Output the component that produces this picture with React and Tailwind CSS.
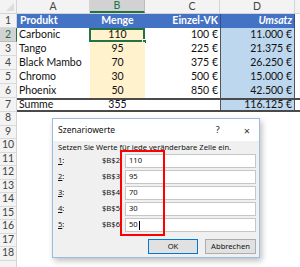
import React from "react";

const data = [
  ["Carbonic", "110", "100 €", "11.000 €"],
  ["Tango", "95", "225 €", "21.375 €"],
  ["Black Mambo", "70", "375 €", "26.250 €"],
  ["Chromo", "30", "500 €", "15.000 €"],
  ["Phoenix", "50", "850 €", "42.500 €"],
];

const inputs = [
  ["1", "$B$2", "110"],
  ["2", "$B$3", "95"],
  ["3", "$B$4", "70"],
  ["4", "$B$5", "30"],
  ["5", "$B$6", "50"],
];

function RowNum({ n, active, h }) {
  return (
    <div
      className={`w-[17px] shrink-0 flex items-center justify-center border-r border-b ${
        active
          ? "bg-[#d2d2d2] text-[#217346] border-r-[#217346] border-b-[#bcbcbc]"
          : "bg-[#f3f3f3] text-[#444] border-r-[#d4d4d4] border-b-[#dadada]"
      } ${h}`}
    >
      {n}
    </div>
  );
}

export default function App() {
  const emptyRows = [8, 9, 10, 11, 12, 13, 14, 15, 16, 17, 18];
  return (
    <div className="relative w-[300px] h-[267px] overflow-hidden bg-white font-['Lato',sans-serif] text-[10.5px] text-[#111]">
      {/* column header */}
      <div className="flex h-[14px] bg-[#f3f3f3] text-[#444] border-b border-[#d4d4d4]">
        <div className="relative w-[17px] shrink-0 border-r border-[#d4d4d4]">
          <div className="absolute right-[2px] bottom-[2px] w-0 h-0 border-l-[8px] border-l-transparent border-b-[8px] border-b-[#dcdcdc]" />
        </div>
        <div className="w-[73px] shrink-0 flex items-center justify-center border-r border-[#d4d4d4]">A</div>
        <div className="w-[55px] shrink-0 flex items-center justify-center bg-[#d2d2d2] text-[#217346] border-r border-[#bcbcbc] border-b-2 border-b-[#217346]">B</div>
        <div className="w-[75px] shrink-0 flex items-center justify-center pl-[20px] border-r border-[#d4d4d4]">C</div>
        <div className="w-[75px] shrink-0 flex items-center justify-center border-r border-[#d4d4d4]">D</div>
        <div className="flex-1" />
      </div>

      {/* row 1 */}
      <div className="flex h-[14px]">
        <RowNum n="1" h="h-[14px]" />
        <div className="w-[73px] shrink-0 bg-[#4472c4] text-white font-bold flex items-center pl-[3px]">Produkt</div>
        <div className="w-[55px] shrink-0 bg-[#4472c4] text-white font-bold flex items-center justify-center">Menge</div>
        <div className="w-[75px] shrink-0 bg-[#4472c4] text-white font-bold flex items-center justify-end pr-[2px]">Einzel-VK</div>
        <div className="w-[75px] shrink-0 bg-[#4472c4] text-white font-bold italic flex items-center justify-end pr-[2px] border-x border-[#2f4f8a]">Umsatz</div>
        <div className="flex-1" />
      </div>

      {/* data rows */}
      {data.map((r, i) => (
        <div key={i} className="flex h-[14px]">
          <RowNum n={String(i + 2)} active={i === 0} h="h-[14px]" />
          <div className="w-[73px] shrink-0 flex items-center pl-[2px]">{r[0]}</div>
          <div className="relative w-[55px] shrink-0 bg-[#fff2cc] flex items-center justify-center">
            {r[1]}
            {i === 0 && (
              <div className="absolute left-[-1px] top-0 right-0 bottom-0 border-2 border-[#217346]">
                <div className="absolute right-[-4px] bottom-[-4px] w-[5px] h-[5px] bg-[#217346] border border-white" />
              </div>
            )}
          </div>
          <div className="w-[75px] shrink-0 flex items-center justify-end pr-[2px]">{r[2]}</div>
          <div className="w-[75px] shrink-0 bg-[#bdd7ee] flex items-center justify-end pr-[2px] border-x border-[#555]">{r[3]}</div>
          <div className="flex-1" />
        </div>
      ))}

      {/* row 7 */}
      <div className="flex h-[14px]">
        <RowNum n="7" h="h-[14px]" />
        <div className="flex flex-1 border-y-2 border-[#4a4a4a]">
          <div className="w-[73px] shrink-0 flex items-center pl-[2px]">Summe</div>
          <div className="w-[55px] shrink-0 flex items-center justify-center">355</div>
          <div className="w-[75px] shrink-0" />
          <div className="w-[75px] shrink-0 bg-[#bdd7ee] flex items-center justify-end pr-[2px] border-x border-[#555]">116.125 €</div>
          <div className="flex-1" />
        </div>
      </div>

      {emptyRows.map((n) => (
        <div key={n} className="flex h-[13.5px]">
          <RowNum n={String(n)} h="h-[13.5px]" />
          <div className="flex-1" />
        </div>
      ))}
      <div className="flex h-[13.5px]">
        <RowNum n="" h="h-[13.5px]" />
        <div className="flex-1" />
      </div>

      {/* dialog */}
      <div className="absolute left-[52px] top-[118px] w-[208px] h-[140px] border border-[#9cbbe0] bg-[#f0f0f0] shadow-[2px_3px_6px_rgba(0,0,0,0.25)] font-['Noto_Sans',sans-serif] text-[7.6px] text-[#111] flex flex-col">
        <div className="h-[22px] bg-white flex items-center pl-[5px] pr-[9px] text-[8.5px]">
          <span className="flex-1">Szenariowerte</span>
          <span className="mr-[24px] text-[9px]">?</span>
          <span className="text-[11px] leading-none text-[#333]">×</span>
        </div>
        <div className="relative flex-1 flex flex-col pl-[5px] pr-[3px]">
          <div className="h-[12px] mt-[1px] flex items-center">Setzen Sie Werte für jede veränderbare Zelle ein.</div>
          <div className="flex flex-col gap-[2px]">
            {inputs.map(([n, ref, v], i) => (
              <div key={n} className="flex items-center h-[14px]">
                <span className="w-[20px]"><span className="underline">{n}</span>:</span>
                <span className="w-[42px] text-right">{ref}</span>
                <div className="ml-[5px] w-[131px] h-[14px] bg-white border border-[#c6c6c6] flex items-center pl-[3px]">
                  {v}
                  {i === 4 && <span className="w-px h-[9px] bg-black ml-px" />}
                </div>
              </div>
            ))}
          </div>
          <div className="flex justify-end gap-[7px] mt-[7px]">
            <div className="w-[50px] h-[15px] bg-[#e1e1e1] border border-[#0078d7] flex items-center justify-center">OK</div>
            <div className="w-[51px] h-[15px] bg-[#e1e1e1] border border-[#adadad] flex items-center justify-center">Abbrechen</div>
          </div>
          <div className="absolute left-[67px] top-[9px] w-[45px] h-[86px] border-2 border-[#ff0000]" />
        </div>
      </div>
    </div>
  );
}
